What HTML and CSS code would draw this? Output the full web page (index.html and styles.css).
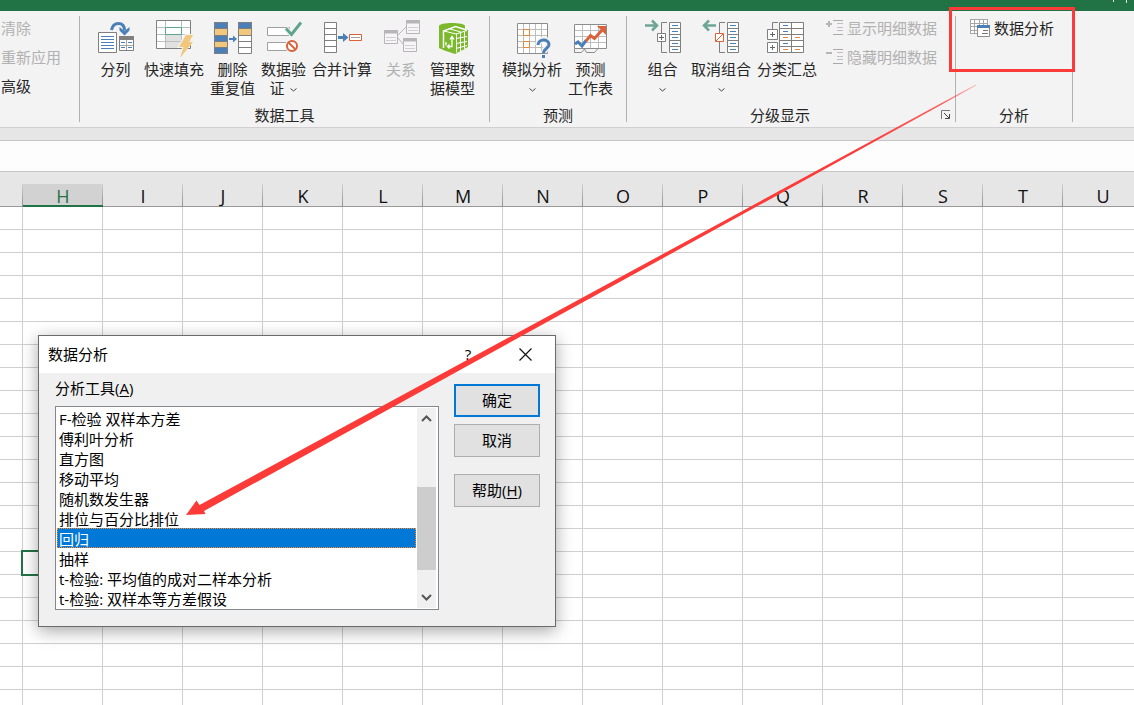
FILE: index.html
```html
<!DOCTYPE html>
<html lang="zh-CN">
<head>
<meta charset="utf-8">
<title>数据分析</title>
<link rel="stylesheet" href="styles.css">
</head>
<body>
<div class="app">
  <header class="titlebar">
    <svg class="titlebar-marks" width="20" height="4" viewBox="0 0 20 4"><path d="M2.500 0v2M15.500 0v3" stroke="#dfeae3" fill="none"/></svg>
  </header>

  <nav class="ribbon" aria-label="数据">
    <section class="group group-sort">
      <div class="group-body">
        <div class="stack">
          <button class="small" disabled>清除</button>
          <button class="small" disabled>重新应用</button>
          <button class="small">高级</button>
        </div>
      </div>
    </section>

    <section class="group group-tools">
      <div class="group-body">
        <button class="big">
          <svg class="icon" viewBox="96 18 40 40" fill="none">
            <path d="M98.500 32.500h18v20h-18z" fill="#fff" stroke="#7f7f7f"/>
            <path d="M101 36.500h13M101 39.500h13M101 42.500h13M101 45.500h13M101 48.500h13" stroke="#4a7fb8"/>
            <path d="M119.500 36.500h14v14h-14z" fill="#fff" stroke="#7f7f7f"/>
            <path d="M119 36h15v4h-15z" fill="#7f7f7f"/>
            <path d="M126.500 40v10M120 45.500h13" stroke="#a6a6a6"/>
            <path d="M121 42.500h4M128 42.500h4M121 47.500h4M128 47.500h4" stroke="#4a7fb8"/>
            <path d="M111.500 30c1-5 4-6.500 7-6.500 4 0 6 2.500 6 7" stroke="#4a7fb8" stroke-width="3"/>
            <path d="M119.500 27l5 4 5-4v3.500l-5 5-5-5z" fill="#4a7fb8"/>
          </svg>
          <span>分列</span>
        </button>
        <button class="big">
          <svg class="icon" viewBox="154 18 40 40" fill="none">
            <path d="M156.500 20.500h34v28h-34z" fill="#fff"/>
            <path d="M165 35h17v14h-17z" fill="#e1e1e1"/>
            <path d="M165.500 20v28M181.500 20v28M156 27.500h34M156 34.500h34M156 41.500h34" stroke="#bdbdbd"/>
            <path d="M156.500 20.500h34v28h-34z" stroke="#7f7f7f"/>
            <path d="M165.500 27.500h16v7h-16z" fill="#fff" stroke="#5fa58c"/>
            <path d="M185 34h9.500l-4 7h4L178 59l4-11h-5z" fill="#f3f3f3"/>
            <path d="M186 35h7l-4 7h4l-13 16 3.500-11H179z" fill="#f0c77b"/>
          </svg>
          <span>快速填充</span>
        </button>
        <button class="big">
          <svg class="icon" viewBox="213 18 40 40" fill="none">
            <path d="M214 22h14v32h-14z" fill="#4a7fb8"/>
            <path d="M214 29h14v6h-14zM214 41h14v6h-14z" fill="#f0c77b"/>
            <path d="M238 22h14v32h-14z" fill="#fff"/>
            <path d="M238 22h14v6h-14z" fill="#4a7fb8"/><path d="M238 29h14v6h-14z" fill="#f0c77b"/>
            <path d="M238 28.500h14M238 35.500h14M238 41.500h14M238 47.500h14M214 28.500h14M214 35.500h14M214 41.500h14M214 47.500h14M214.500 22.500h13v31h-13zM238.500 22.500h13v31h-13z" stroke="#7f7f7f"/>
            <path d="M229 38h4v-2.500l4 3.500-4 3.500V40h-4z" fill="#4a7fb8"/>
          </svg>
          <span>删除<br>重复值</span>
        </button>
        <button class="big">
          <svg class="icon" viewBox="264 18 40 40" fill="none">
            <path d="M267.500 27.500h22v8h-22zM267.500 42.500h22v8h-22z" fill="#fff" stroke="#a0a0a0"/>
            <circle cx="292" cy="46" r="7" fill="#f3f3f3"/>
            <path d="M286 28.500l5.500 6L301 22.500" stroke="#f3f3f3" stroke-width="5"/>
            <path d="M286 28.500l5.500 6L301 22.500" stroke="#5fa58c" stroke-width="3"/>
            <circle cx="292" cy="46" r="5" fill="#fff" stroke="#d9623b" stroke-width="2"/>
            <path d="M288.500 42.500l7 7" stroke="#d9623b" stroke-width="2"/>
          </svg>
          <span>数据验<br>证 <svg class="chev inline" viewBox="0 0 7 4"><path d="M.5 .5l3 2.500 3-2.500" fill="none" stroke="#444"/></svg></span>
        </button>
        <button class="big">
          <svg class="icon" viewBox="322 18 40 40" fill="none">
            <path d="M324.500 22.500h12v30h-12z" fill="#fff" stroke="#7f7f7f"/>
            <path d="M324 28.500h13M324 34.500h13M324 40.500h13M324 46.500h13" stroke="#7f7f7f"/>
            <path d="M338 36h5v-3l5.500 4.500L343 42v-3h-5z" fill="#4a7fb8"/>
            <path d="M349.500 34.500h12v6h-12z" fill="#fff" stroke="#d9623b"/>
            <path d="M351 37.500h9" stroke="#a0a0a0"/>
          </svg>
          <span>合并计算</span>
        </button>
        <button class="big relation" disabled>
          <svg class="icon" viewBox="381 18 40 40" fill="none" stroke="#b7b5b7">
            <path d="M398 35l8-8M398 38l5 6"/>
            <path d="M384.500 30.500h13v13h-13zM406.500 20.500h13v13h-13zM403.500 38.500h13v13h-13z" fill="#f8f5f8"/>
            <path d="M384 32h14M406 22h14M403 40h14" stroke-width="3"/>
            <path d="M386 37.500h10M386 40.500h10M408 27.500h10M408 30.500h10M405 45.500h10M405 48.500h10" stroke="#d2cfd2"/>
          </svg>
          <span>关系</span>
        </button>
        <button class="big">
          <svg class="icon" viewBox="433 18 40 40" fill="none">
            <path d="M439 26c0-4 26-4 26 0v23c-3 2-23 2-26-1z" fill="#7ab92c"/>
            <path d="M443 31l12-5 13 4v17l-13 7-12-4z" fill="#7ab92c"/>
            <path d="M443.500 48V31l12-4.500 11 3.500" stroke="#fff" stroke-width="1.500"/>
            <path d="M444 31l12 3 11-3.500M456.500 34v18.500M460.500 33v18M464.500 32v17M456 38.500l11-2M456 43.500l11-2M456 48.500l11-3M450 29l11 3" stroke="#fff"/>
            <path d="M448 46.500h4v-9M450 39.500l2-3 2 3M446 42v3.500M449.500 44.500l-2 2 2 2" stroke="#fff" stroke-width="1.300"/>
          </svg>
          <span>管理数<br>据模型</span>
        </button>
      </div>
      <div class="group-label"><span>数据工具</span></div>
    </section>

    <section class="group group-forecast">
      <div class="group-body">
        <button class="big">
          <svg class="icon" viewBox="512 18 40 40" fill="none">
            <path d="M517.500 23.500h30v30h-30z" fill="#fff"/>
            <path d="M523.500 23v30M529.500 23v30M535.500 23v30M541.500 23v30M517 29.500h30M517 35.500h30M517 41.500h30M517 47.500h30" stroke="#bdbdbd"/>
            <path d="M517.500 23.500h30v30h-30z" stroke="#8c8c8c"/>
            <path d="M523.500 29.500h6v6h-6zM523.500 41.500h6v6h-6z" fill="#fff" stroke="#e0873a"/>
            <path d="M538 45c0-7 11-7 11-1 0 4-5 4-5 9" stroke="#f3f3f3" stroke-width="6"/>
            <path d="M538 45c0-6.500 11-6.500 11-.5 0 4-5.500 4-5.500 8.500" stroke="#4a7fb8" stroke-width="3"/>
            <path d="M541 54h5v4h-5z" fill="#f3f3f3"/><path d="M542 55h3v3h-3z" fill="#4a7fb8"/>
          </svg>
          <span>模拟分析<br><svg class="chev" viewBox="0 0 7 4"><path d="M.5 .5l3 2.500 3-2.500" fill="none" stroke="#444"/></svg></span>
        </button>
        <button class="big">
          <svg class="icon" viewBox="571 18 40 40" fill="none">
            <path d="M574.500 24.500h32v24h-32z" fill="#fff"/>
            <path d="M582.500 24v24M590.500 24v24M598.500 24v24M574 30.500h32M574 36.500h32M574 42.500h32" stroke="#bdbdbd"/>
            <path d="M574.500 24.500h32v24h-32z" stroke="#8c8c8c"/>
            <path d="M574.500 49v3.500h7l3-3.500 2 3.500h8l3-3.500" stroke="#8c8c8c"/>
            <path d="M575 44l3-2 4 4 4-5.500" stroke="#4a7fb8" stroke-width="3"/>
            <path d="M586 41l4.500-5.500 4 3 9-10" stroke="#d9623b" stroke-width="3"/>
            <path d="M597 26h9v9l-2.500-2.500-4-4z" fill="#d9623b"/>
          </svg>
          <span>预测<br>工作表</span>
        </button>
      </div>
      <div class="group-label"><span>预测</span></div>
    </section>

    <section class="group group-outline">
      <div class="group-body">
        <button class="big">
          <svg class="icon" viewBox="643 18 40 40" fill="none">
            <path d="M645 25.500h12M652 20.500l5 5-5 5" stroke="#6fa594" stroke-width="2.500"/>
            <path d="M667 22.500h-5.500V33M661.500 42v10.500h5.500" stroke="#7f7f7f"/>
            <path d="M657.500 33.500h8v8h-8z" fill="#fff" stroke="#7f7f7f"/><path d="M659 37.500h5M661.500 35v5" stroke="#666"/>
            <path d="M669.500 22.500h11v30h-11zM669 28.500h11M669 34.500h11M669 40.500h11M669 46.500h11" fill="#fff" stroke="#7f7f7f"/>
            <path d="M672 25.500h6M672 31.500h6M672 37.500h6M672 43.500h6M672 49.500h6" stroke="#4a7fb8"/>
          </svg>
          <span>组合<br><svg class="chev" viewBox="0 0 7 4"><path d="M.5 .5l3 2.500 3-2.500" fill="none" stroke="#444"/></svg></span>
        </button>
        <button class="big">
          <svg class="icon" viewBox="701 18 40 40" fill="none">
            <path d="M716 25.500h-12M709 20.500l-5 5 5 5" stroke="#6fa594" stroke-width="2.500"/>
            <path d="M725 22.500h-5.500V33M719.500 42v10.500h5.500" stroke="#7f7f7f"/>
            <path d="M715.500 33.500h8v8h-8z" fill="#fff" stroke="#d9623b"/><path d="M716 41l7-7" stroke="#d9623b"/>
            <path d="M727.500 22.500h11v30h-11zM727 28.500h11M727 34.500h11M727 40.500h11M727 46.500h11" fill="#fff" stroke="#7f7f7f"/>
            <path d="M730 25.500h6M730 31.500h6M730 37.500h6M730 43.500h6M730 49.500h6" stroke="#4a7fb8"/>
          </svg>
          <span>取消组合<br><svg class="chev" viewBox="0 0 7 4"><path d="M.5 .5l3 2.500 3-2.500" fill="none" stroke="#444"/></svg></span>
        </button>
        <button class="big">
          <svg class="icon" viewBox="767 18 40 40" fill="none">
            <path d="M778 22.500h-5.500V29" stroke="#7f7f7f"/>
            <path d="M767.500 29.500h10v10h-10zM767.500 42.500h10v10h-10z" fill="#fff" stroke="#7f7f7f"/>
            <path d="M770 34.500h5M772.500 32v5M770 47.500h5M772.500 45v5" stroke="#666"/>
            <path d="M779.500 22.500h24v30h-24zM779 28.500h24M779 34.500h24M779 40.500h24M779 46.500h24M791.500 23v29" fill="#fff" stroke="#7f7f7f"/>
            <path d="M783 25.500h5M783 31.500h5M783 43.500h5" stroke="#4a7fb8"/>
            <path d="M783 37.500h5M795 37.500h5M783 49.500h5M795 49.500h5" stroke="#e0873a"/>
          </svg>
          <span>分类汇总</span>
        </button>
        <div class="stack details">
          <button class="small" disabled>
            <svg class="icon-s" viewBox="824 19 18 18" fill="none"><path d="M825 24h6M828 21v6" stroke="#b5b5b5" stroke-width="2"/><path d="M832 20.500h10M832 34.500h10" stroke="#a9a9a9"/><path d="M836 23.500h6M836 27.500h6M836 30.500h6" stroke="#c4bcc4"/></svg>
            显示明细数据
          </button>
          <button class="small" disabled>
            <svg class="icon-s" viewBox="824 19 18 18" fill="none"><path d="M825 24h6" stroke="#b5b5b5" stroke-width="2"/><path d="M832 20.500h10M832 34.500h10" stroke="#a9a9a9"/><path d="M836 23.500h6M836 27.500h6M836 30.500h6" stroke="#c4bcc4"/></svg>
            隐藏明细数据
          </button>
        </div>
      </div>
      <div class="group-label">
        <span>分级显示</span>
        <button class="launcher" aria-label="分级显示设置"><svg width="10" height="10" viewBox="0 0 10 10" fill="none"><path d="M.5 9V.5H9" stroke="#777"/><path d="M3 3l5 5M8.500 4v4.500H4" stroke="#444"/></svg></button>
      </div>
    </section>

    <section class="group group-analysis">
      <div class="group-body">
        <div class="stack">
          <button class="small">
            <svg class="icon-l" viewBox="970 19 20 20" fill="none">
              <path d="M970.500 20.500h17v14h-17z" fill="#fff"/>
              <path d="M970.500 20v15M974.500 20v15M979.500 20v15M983.500 20v15M987.500 20v6M970 20.500h18M970 24.500h18M970 27.500h18M970 31.500h18M970 34.500h8" stroke="#a6a6a6"/>
              <path d="M977.500 26.500h12v11h-12z" fill="#fff" stroke="#8c8c8c"/>
              <path d="M977 26h13v3h-13z" fill="#4a7fb8"/>
              <path d="M983 31.500h5M982 34.500h6" stroke="#777"/>
            </svg>
            数据分析
          </button>
        </div>
      </div>
      <div class="group-label"><span>分析</span></div>
    </section>
  </nav>

  <div class="strip"></div>
  <div class="formula-bar"></div>

  <main class="sheet">
    <table class="cells">
      <thead><tr class="letters"></tr></thead>
      <tbody class="rows"></tbody>
    </table>
  </main>

  <div class="dialog" role="dialog" aria-labelledby="dialog-title">
    <div class="dialog-head">
      <h1 id="dialog-title">数据分析</h1>
      <button class="head-btn help">?</button>
      <button class="head-btn close" aria-label="关闭"><svg width="13" height="13" viewBox="0 0 13 13"><path d="M.5 .5l12 12M12.500 .5l-12 12" stroke="#111" stroke-width="1.200"/></svg></button>
    </div>
    <div class="dialog-body">
      <div class="tools">
        <label for="tool-list">分析工具(<u>A</u>)</label>
        <div class="listbox">
          <select id="tool-list" size="10">
            <option>F-检验 双样本方差</option>
            <option>傅利叶分析</option>
            <option>直方图</option>
            <option>移动平均</option>
            <option>随机数发生器</option>
            <option>排位与百分比排位</option>
            <option selected>回归</option>
            <option>抽样</option>
            <option>t-检验: 平均值的成对二样本分析</option>
            <option>t-检验: 双样本等方差假设</option>
          </select>
          <div class="scroll" aria-hidden="true">
            <svg viewBox="0 0 11 7"><path d="M1 6l4.500-4.500L10 6" fill="none" stroke="#555" stroke-width="2"/></svg>
            <div class="track"><div class="thumb"></div></div>
            <svg viewBox="0 0 11 7"><path d="M1 1l4.500 4.500L10 1" fill="none" stroke="#555" stroke-width="2"/></svg>
          </div>
        </div>
      </div>
      <div class="actions">
        <button class="action primary">确定</button>
        <button class="action">取消</button>
        <button class="action apart">帮助(<u>H</u>)</button>
      </div>
    </div>
  </div>

  <svg class="markup" width="1134" height="705" viewBox="0 0 1134 705" aria-hidden="true">
    <defs><linearGradient id="fade" gradientUnits="userSpaceOnUse" x1="860" y1="148" x2="976" y2="85"><stop offset="0" stop-color="#fc3a38"/><stop offset=".7" stop-color="#fc3a38" stop-opacity=".8"/><stop offset="1" stop-color="#fc3a38" stop-opacity=".25"/></linearGradient></defs>
    <path d="M186 515l10.500-14.500 3 4.500L975.700 84.600l.6 1L204 511l1.500 3z" fill="url(#fade)"/>
    <path d="M950.500 8.500h123v62h-123z" fill="none" stroke="#fc3a38" stroke-width="3"/>
  </svg>
</div>
<script src="sheet.js"></script>
</body>
</html>
```

FILE: styles.css
```css
* { box-sizing: border-box; }

body {
  margin: 0;
  font: 15px/19px "Open Sans", "Noto Sans CJK SC", sans-serif;
  color: #262626;
  background: #fff;
}

button {
  margin: 0;
  padding: 0;
  border: 0;
  background: none;
  font: inherit;
  color: inherit;
}

.app {
  position: relative;
  display: flex;
  flex-direction: column;
  height: 100vh;
  overflow: hidden;
}

.titlebar {
  flex: none;
  display: flex;
  justify-content: flex-end;
  height: 11px;
  padding-right: 3px;
  background: #217346;
}

.ribbon {
  flex: none;
  display: flex;
  padding: 5px 0;
  background: #f3f3f3;
  border-bottom: 1px solid #d0d0d0;
}

.group {
  flex: none;
  display: flex;
  flex-direction: column;
  justify-content: space-between;
  height: 106px;
  border-right: 1px solid #b1b1b1;
}

.group-sort { width: 80px; padding-left: 1px; }
.group-tools { width: 410px; }
.group-forecast { width: 137px; }
.group-outline { width: 329px; }
.group-analysis { width: 117px; }

.group-body { display: flex; gap: 6px; }
.group-tools .group-body { padding-left: 13px; }
.group-forecast .group-body { padding-left: 12px; }
.group-outline .group-body { padding-left: 13px; }
.group-analysis .group-body { padding-left: 14px; }

.big {
  display: flex;
  flex-direction: column;
  align-items: center;
  gap: 2px;
  min-width: 45px;
  padding-top: 2px;
  white-space: nowrap;
}

.relation { min-width: 46px; }

.icon { display: block; width: 40px; height: 40px; margin: 0 -3px; }
.icon-s { width: 18px; height: 18px; }
.icon-l { width: 20px; height: 20px; }
.chev { width: 7px; height: 4px; vertical-align: middle; }
.chev.inline { margin-left: 2px; }

.stack { display: flex; flex-direction: column; gap: 5px; }
.details { padding-left: 2px; }

.small {
  display: flex;
  align-items: center;
  gap: 4px;
  line-height: 24px;
  white-space: nowrap;
}

button:disabled { color: #b1b1b1; }

.group-label {
  display: flex;
  align-items: center;
  line-height: 14px;
  text-align: center;
}

.group-label span { flex: 1; }
.launcher { width: 22px; height: 10px; padding-left: 4px; line-height: 0; }

.strip {
  flex: none;
  height: 13px;
  background: #e6e6e6;
  border-bottom: 1px solid #c6c6c6;
}

.formula-bar {
  flex: none;
  height: 31px;
  background: #fdfdfd;
  border-bottom: 1px solid #c6c6c6;
}

.sheet {
  flex: 1;
  min-height: 0;
  padding-top: 12px;
  overflow: hidden;
  background: linear-gradient(#e6e6e6, #e6e6e6) top / 100% 12px no-repeat #fff;
}

.cells {
  width: 1143px;
  table-layout: fixed;
  border-collapse: separate;
  border-spacing: 0;
}

.cells th {
  width: 80px;
  height: 23px;
  padding: 3px 0 0;
  border-bottom: 1px solid #999;
  background: linear-gradient(#d0d0d0, #909090) right / 1px 100% no-repeat #e6e6e6;
  font: 18px/18px "Open Sans", "Noto Sans CJK SC", sans-serif;
  vertical-align: top;
  color: #111;
}

.cells th:first-child { width: 23px; }

.cells th.current {
  border-bottom: 2px solid #217346;
  background-color: #d2d2d2;
  color: #217346;
}

.cells td {
  height: 23px;
  padding: 0;
  border-right: 1px solid #d0d0d0;
  border-bottom: 1px solid #d0d0d0;
}

.cells td.active { position: relative; }

.cells td.active::after {
  content: "";
  position: absolute;
  inset: -2px;
  border: 2px solid #217346;
}

.dialog {
  position: absolute;
  left: 38px;
  top: 335px;
  width: 518px;
  border: 1px solid #6b6b6b;
  background: #f0f0f0;
  box-shadow: 0 4px 16px rgba(0, 0, 0, .35);
  color: #000;
}

.dialog-head {
  display: flex;
  align-items: center;
  height: 37px;
  padding-left: 9px;
  background: #fff;
}

.dialog-head h1 { flex: 1; margin: 0; font-size: 15px; font-weight: 400; }
.head-btn { height: 37px; line-height: 37px; text-align: center; }
.help { width: 54px; }
.close { width: 60px; line-height: 0; }

.dialog-body {
  display: flex;
  gap: 15px;
  padding: 6px 15px 16px 16px;
}

.tools { flex: 1; }
.tools label { display: block; line-height: 18px; margin-bottom: 9px; }

.listbox {
  display: flex;
  height: 204px;
  padding: 1px;
  border: 1px solid #828790;
  background: #fff;
}

.listbox select {
  flex: 1;
  min-width: 0;
  height: 200px;
  padding: 0;
  border: 0;
  outline: 0;
  overflow: hidden;
  scrollbar-width: none;
  background: #fff;
  font: 15px/18px "Open Sans", "Noto Sans CJK SC", sans-serif;
  color: #000;
}

.listbox option {
  height: 20px;
  min-height: 20px;
  padding: 0 2px 2px;
  line-height: 18px;
}

.listbox option:checked {
  background: linear-gradient(#0078d7, #0078d7);
  outline: 1px dotted #ff8728;
  outline-offset: -1px;
  color: #fff;
  -webkit-text-fill-color: #fff;
}

.scroll {
  display: flex;
  flex-direction: column;
  align-items: center;
  width: 19px;
  margin: 0 1px;
  padding: 7px 0;
  background: #f0f0f0;
}

.scroll svg { flex: none; width: 11px; height: 7px; }
.track { flex: 1; width: 100%; padding-top: 65px; }
.thumb { height: 83px; background: #cdcdcd; }

.actions {
  display: flex;
  flex-direction: column;
  gap: 7px;
  width: 86px;
  padding-top: 5px;
}

.action {
  height: 33px;
  border: 1px solid #adadad;
  background: #e1e1e1;
}

.action.primary { border: 2px solid #0078d7; }
.action.apart { margin-top: 10px; }

u { text-underline-offset: 2px; }

.markup {
  position: absolute;
  left: 0;
  top: 0;
  pointer-events: none;
}
```

FILE: sheet.js
```js
const letters = ["", ..."HIJKLMNOPQRSTU"];
const rowCount = 22;
const activeRow = 15;

const head = document.querySelector(".letters");
for (const letter of letters) {
  const th = document.createElement("th");
  th.textContent = letter;
  if (letter === "H") th.className = "current";
  head.append(th);
}

const body = document.querySelector(".rows");
for (let r = 0; r < rowCount; r++) {
  const tr = document.createElement("tr");
  letters.forEach((letter) => {
    const td = document.createElement("td");
    if (r === activeRow && letter === "H") td.className = "active";
    tr.append(td);
  });
  body.append(tr);
}
```
